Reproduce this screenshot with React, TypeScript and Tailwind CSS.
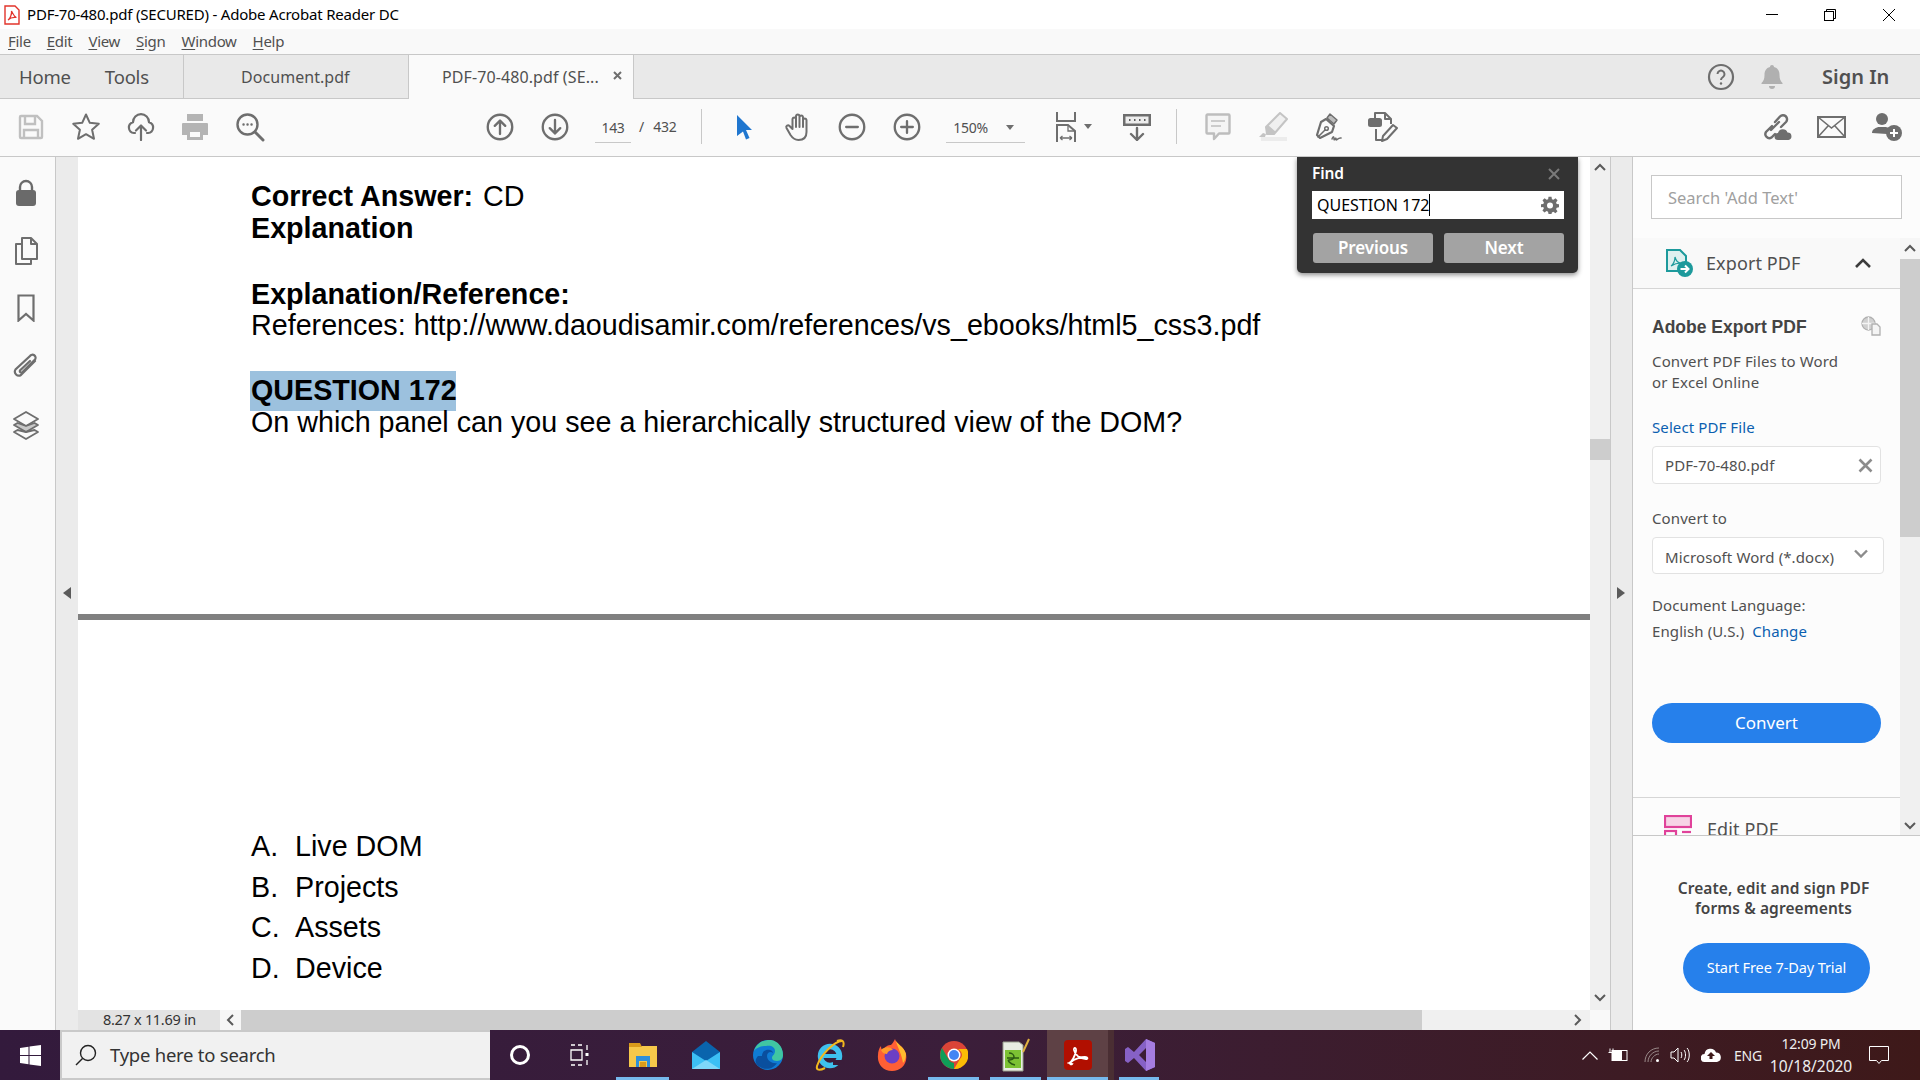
import type { ReactNode } from "react";

const ui = "font-['Noto_Sans',sans-serif]";

function Ico({ s = 24, vb = "0 0 24 24", className = "", children }: { s?: number; vb?: string; className?: string; children: ReactNode }) {
  return (
    <svg width={s} height={s} viewBox={vb} fill="none" stroke="#6e6e6e" strokeWidth="2" strokeLinecap="round" strokeLinejoin="round" className={className}>
      {children}
    </svg>
  );
}

function Slot({ w = 55, children }: { w?: number; children: ReactNode }) {
  return (
    <div className="flex items-center justify-center shrink-0 h-full" style={{ width: w }}>
      {children}
    </div>
  );
}

function U({ children }: { children: ReactNode }) {
  return <span className="underline underline-offset-2 decoration-1">{children}</span>;
}

function TitleBar() {
  return (
    <div className={`h-[29px] bg-white flex items-center shrink-0 ${ui}`}>
      <svg width="16" height="20" viewBox="0 0 16 20" className="ml-[4px]">
        <path d="M1 1h10l4 4v14H1z" fill="#fff" stroke="#e2342b" strokeWidth="1.4" />
        <path d="M4 15c2-1 4-6 3.500-9 2 4 3 6 5 6.500-3-.5-6 0-8.500 2.500z" fill="none" stroke="#e2342b" strokeWidth="1.200" />
      </svg>
      <span className="ml-[7px] text-[15px] text-black tracking-[-0.2px] whitespace-nowrap">PDF-70-480.pdf (SECURED) - Adobe Acrobat Reader DC</span>
      <div className="ml-auto flex items-center h-full pr-[2px]">
        <div className="w-[58px] h-full flex items-center justify-center">
          <div className="w-[12px] h-px bg-black" />
        </div>
        <div className="w-[58px] h-full flex items-center justify-center">
          <svg width="12" height="12" viewBox="0 0 12 12" fill="none" stroke="#000">
            <rect x=".5" y="2.500" width="9" height="9" />
            <path d="M2.500 2.500V.5h9v9h-2" />
          </svg>
        </div>
        <div className="w-[59px] h-full flex items-center justify-center">
          <svg width="12" height="12" viewBox="0 0 12 12" fill="none" stroke="#000">
            <path d="M0 0l12 12M12 0L0 12" />
          </svg>
        </div>
      </div>
    </div>
  );
}

function MenuBar() {
  return (
    <div className={`h-[26px] bg-[#f9f9f9] border-b border-[#c8c8c8] flex items-center shrink-0 pl-[8px] gap-[16px] text-[15px] text-[#505050] tracking-[-0.3px] ${ui}`}>
      <span><U>F</U>ile</span>
      <span><U>E</U>dit</span>
      <span><U>V</U>iew</span>
      <span><U>S</U>ign</span>
      <span><U>W</U>indow</span>
      <span><U>H</U>elp</span>
    </div>
  );
}

function TabBar() {
  return (
    <div className={`h-[44px] bg-[#e9e9e9] border-b border-[#c8c8c8] flex items-center shrink-0 text-[#505050] ${ui}`}>
      <div className="w-[184px] h-full border-r border-[#c8c8c8] flex items-center pl-[19px] gap-[34px] text-[18.500px] tracking-[-0.2px]">
        <span>Home</span>
        <span>Tools</span>
      </div>
      <div className="w-[224px] h-full flex items-center pl-[57px] text-[16px] tracking-[0.05px]">Document.pdf</div>
      <div className="w-[226px] h-[44px] bg-[#fafafa] border-x border-[#c8c8c8] flex items-center pl-[33px] text-[16px] tracking-[0.1px] whitespace-nowrap relative">
        PDF-70-480.pdf (SE...
        <svg width="9" height="9" viewBox="0 0 9 9" stroke="#6e6e6e" strokeWidth="2" className="absolute left-[204px] top-[16px]">
          <path d="M1 1l7 7M8 1L1 8" />
        </svg>
      </div>
      <div className="ml-auto flex items-center h-full pr-[24px]">
        <Slot w={50}>
          <svg width="28" height="28" viewBox="0 0 28 28" fill="none" stroke="#6e6e6e" strokeWidth="2.200">
            <circle cx="14" cy="14" r="12" />
            <path d="M10.500 11a3.500 3.500 0 1 1 5.500 3c-1.500 1-2 1.500-2 3" strokeWidth="2" />
            <circle cx="14" cy="20.500" r="1.200" fill="#6e6e6e" stroke="none" />
          </svg>
        </Slot>
        <Slot w={52}>
          <svg width="22" height="26" viewBox="0 0 22 26" fill="#b0b0b0">
            <path d="M11 1c1.200 0 2 .8 2 2 4 1 5.500 4 5.500 8 0 4 1 6 3 8v1H.5v-1c2-2 3-4 3-8 0-4 1.500-7 5.500-8 0-1.200.8-2 2-2z" />
            <path d="M8 22h6a3 3 0 0 1-6 0z" />
          </svg>
        </Slot>
        <div className="w-[98px] pl-[24px] pt-[1px] text-[20px] font-semibold text-[#505050] whitespace-nowrap">Sign In</div>
      </div>
    </div>
  );
}

function ToolBar() {
  return (
    <div className={`h-[58px] bg-[#fafafa] border-b border-[#c8c8c8] flex items-center shrink-0 pb-[2px] text-[#505050] ${ui}`}>
      <div className="w-[3px] shrink-0" />
      <Slot>
        <svg width="26" height="26" viewBox="0 0 26 26" fill="none" stroke="#c0c0c0" strokeWidth="2.400">
          <path d="M2 3a1 1 0 0 1 1-1h16l5 5v16a1 1 0 0 1-1 1H3a1 1 0 0 1-1-1z" />
          <path d="M7 2v8h10V2M6 24v-8h14v8" />
        </svg>
      </Slot>
      <Slot>
        <svg width="30" height="30" viewBox="0 0 30 30" fill="none" stroke="#6e6e6e" strokeWidth="2" strokeLinejoin="round">
          <path d="M15 2.500l3.800 8.300 9 1-6.700 6 1.900 9L15 22.200l-8 4.600 1.900-9-6.700-6 9-1z" />
        </svg>
      </Slot>
      <Slot>
        <svg width="28" height="28" viewBox="0 0 28 28" fill="none" stroke="#6e6e6e" strokeWidth="2.200" strokeLinecap="round" strokeLinejoin="round">
          <path d="M8 20H7a5.500 5.500 0 0 1-1-10.800 8 8 0 0 1 16 0A5.500 5.500 0 0 1 21 20h-1" />
          <path d="M14 27V13M9 17.500l5-5 5 5" />
        </svg>
      </Slot>
      <Slot w={53}>
        <svg width="28" height="28" viewBox="0 0 28 28" fill="#b4b4b4">
          <path d="M6 1h16v7H6zM2 10h24a1 1 0 0 1 1 1v11h-5v5H6v-5H1V11a1 1 0 0 1 1-1z" />
          <path d="M9 19h10v5H9z" fill="#fafafa" />
        </svg>
      </Slot>
      <Slot w={57}>
        <svg width="30" height="30" viewBox="0 0 30 30" fill="none" stroke="#6e6e6e" strokeWidth="2.400" strokeLinecap="round">
          <circle cx="12.500" cy="12.500" r="10" />
          <path d="M20 20l8 8" strokeWidth="3" />
          <path d="M8.500 12.500h.1M12.500 12.500h.1M16.500 12.500h.1" />
        </svg>
      </Slot>
      <div className="w-[194px] shrink-0" />
      <Slot>
        <Ico s={28}>
          <circle cx="12" cy="12" r="10.500" />
          <path d="M12 18V6.500M7.500 11l4.500-4.500 4.500 4.500" />
        </Ico>
      </Slot>
      <Slot>
        <Ico s={28}>
          <circle cx="12" cy="12" r="10.500" />
          <path d="M12 6v11.500M7.500 13l4.500 4.500 4.500-4.500" />
        </Ico>
      </Slot>
      <div className="w-[13px] shrink-0" />
      <div className="w-[36px] h-[30px] border-b border-[#c8c8c8] flex items-center justify-center text-[14px] shrink-0 mt-[3px] tracking-[-0.3px]">143</div>
      <span className="ml-[8px] text-[14px]">/</span>
      <span className="ml-[9px] text-[14px] tracking-[-0.3px]">432</span>
      <div className="ml-[25px] w-px h-[35px] bg-[#c8c8c8] shrink-0" />
      <div className="w-[14px] shrink-0" />
      <Slot w={56}>
        <svg width="17" height="26" viewBox="0 0 17 26" fill="#1f76cf">
          <path d="M1 1l15 15H10l3.500 8-3.500 1.500L7 17.500 1 22z" />
        </svg>
      </Slot>
      <Slot w={52}>
        <svg width="30" height="30" viewBox="0 0 30 30" fill="none" stroke="#6e6e6e" strokeWidth="2" strokeLinecap="round" strokeLinejoin="round">
          <path d="M9.500 17V7a1.800 1.800 0 0 1 3.500 0v8M13 15V4a1.800 1.800 0 0 1 3.500 0v11M16.500 15V5a1.800 1.800 0 0 1 3.500 0v10M20 15V8a1.800 1.800 0 0 1 3.500 0v12c0 5-3 8-8 8-4 0-6-2-8-5l-4-7c-1-2 1.500-3.500 3-2l3 3" />
        </svg>
      </Slot>
      <Slot>
        <Ico s={28}>
          <circle cx="12" cy="12" r="10.500" />
          <path d="M7 12h10" />
        </Ico>
      </Slot>
      <Slot>
        <Ico s={28}>
          <circle cx="12" cy="12" r="10.500" />
          <path d="M7 12h10M12 7v10" />
        </Ico>
      </Slot>
      <div className="w-[12px] shrink-0" />
      <div className="w-[79px] h-[30px] mt-[3px] border-b border-[#c8c8c8] flex items-center pl-[7px] text-[14px] shrink-0 tracking-[-0.3px] relative">
        150%
        <div className="absolute left-[60px] top-[12px] w-0 h-0 border-x-[4px] border-x-transparent border-t-[5px] border-t-[#6e6e6e]" />
      </div>
      <div className="w-[30px] shrink-0" />
      <svg width="22" height="30" viewBox="0 0 22 30" fill="none" stroke="#6e6e6e" strokeWidth="2" className="shrink-0">
        <path d="M2 0v9h18V0" />
        <path d="M2 30V13h11l7 6v11" />
        <path d="M13 13v6h7M5 26h12M5 26l2.500-2M5 26l2.500 2M17 26l-2.500-2M17 26l-2.500 2" strokeWidth="1.300" />
      </svg>
      <div className="ml-[7px] w-0 h-0 border-x-[4px] border-x-transparent border-t-[5px] border-t-[#6e6e6e] shrink-0" />
      <div className="w-[17px] shrink-0" />
      <Slot w={55}>
        <svg width="28" height="28" viewBox="0 0 28 28" fill="none" stroke="#6e6e6e" strokeWidth="2.400">
          <rect x="0" y="1" width="28" height="12" fill="#6e6e6e" stroke="none" />
          <rect x="2.500" y="3.500" width="23" height="7" fill="#ededed" stroke="none" />
          <path d="M6 7h1.500M11 7h1.500M16 7h1.500M21 7h1.500" stroke="#5a5a5a" strokeWidth="2" />
          <path d="M14 15v12M8 21l6 6 6-6" strokeLinecap="round" strokeLinejoin="round" />
        </svg>
      </Slot>
      <div className="ml-[12px] w-px h-[35px] bg-[#c8c8c8] shrink-0" />
      <div className="w-[13px] shrink-0" />
      <Slot w={55}>
        <svg width="26" height="28" viewBox="0 0 26 28" fill="none" stroke="#bdbdbd" strokeWidth="2.400" strokeLinejoin="round">
          <path d="M2.500 1.500h21a1 1 0 0 1 1 1v17a1 1 0 0 1-1 1H14L9 26v-5.500H2.500a1 1 0 0 1-1-1v-17a1 1 0 0 1 1-1z" fill="#f4f4f4" />
          <path d="M6 8h14M6 13h10" strokeWidth="1.600" />
        </svg>
      </Slot>
      <Slot w={55}>
        <svg width="30" height="30" viewBox="0 0 30 30" fill="none">
          <path d="M22 1l7 6-13 15H9l-1-7z" fill="#f0f0f0" stroke="#c4c4c4" strokeWidth="2" strokeLinejoin="round" />
          <path d="M8 15l1 7 7 0 2-2-8-7z" fill="#c4c4c4" />
          <path d="M5 21l3 1-1 3H1z" fill="#c4c4c4" />
          <rect x="3" y="25" width="26" height="4" fill="#ececec" />
        </svg>
      </Slot>
      <Slot w={55}>
        <svg width="30" height="30" viewBox="0 0 30 30" fill="none" stroke="#6e6e6e" strokeWidth="2.200" strokeLinejoin="round" strokeLinecap="round">
          <path d="M13 7l8 7-2 6-12 6-3-3 4-13z" />
          <path d="M5 25l7-7" strokeWidth="1.500" />
          <circle cx="13.500" cy="16.500" r="1.800" strokeWidth="1.500" />
          <path d="M14 6l3-4 7 6-3 4z" fill="#bdbdbd" stroke="#6e6e6e" strokeWidth="1.500" />
          <path d="M19 27c1-3 2-3 2 0s2-3 2 0 2-2 5-1" strokeWidth="1.500" />
        </svg>
      </Slot>
      <Slot w={55}>
        <svg width="30" height="30" viewBox="0 0 30 30" fill="none" stroke="#6e6e6e" strokeWidth="2" strokeLinejoin="round">
          <path d="M7 8V1h10l6 6v5" />
          <path d="M17 1v6h6" />
          <rect x="1" y="7" width="12" height="7" rx="1.500" fill="#6e6e6e" />
          <path d="M8 17v11h7" />
          <path d="M25 13l4 3-10 11-5 2 1-5z" />
        </svg>
      </Slot>
      <div className="ml-auto flex items-center h-full pr-[6px]">
        <Slot w={55}>
          <svg width="32" height="28" viewBox="0 0 32 28" fill="none" stroke="#6e6e6e" strokeWidth="2.400" strokeLinecap="round">
            <path d="M11 13l-6 6a4 4 0 0 0 5.500 5.500L14 21M10 17l8-8M14 9l5-5.500A4 4 0 0 1 25 9l-5 5" />
            <path d="M17 27a3.500 3.500 0 0 1 0-7 5 5 0 0 1 9.500-.5A3.800 3.800 0 0 1 27.500 27z" fill="#6e6e6e" stroke="none" />
          </svg>
        </Slot>
        <Slot w={55}>
          <svg width="29" height="22" viewBox="0 0 29 22" fill="none" stroke="#6e6e6e" strokeWidth="2">
            <rect x="1" y="1" width="27" height="20" />
            <path d="M1 1l13.500 11L28 1M1 21l10-11M28 21L18 10" strokeWidth="1.600" />
          </svg>
        </Slot>
        <Slot w={55}>
          <svg width="32" height="30" viewBox="0 0 32 30" fill="#6e6e6e">
            <circle cx="11" cy="7" r="6" />
            <path d="M1 21c0-4 4-5 6-6h8c2 .5 3 1 4 2a9 9 0 0 0-3 5z" />
            <circle cx="23" cy="21" r="8" />
            <path d="M23 17v8M19 21h8" stroke="#fff" strokeWidth="2" />
          </svg>
        </Slot>
      </div>
    </div>
  );
}

function LeftRail() {
  return (
    <div className="w-[56px] bg-[#fafafa] border-r border-[#c8c8c8] shrink-0 flex flex-col items-center pt-[21px] pr-[3px]">
      <div className="h-[30px] flex items-center justify-center">
        <svg width="22" height="28" viewBox="0 0 22 28" fill="#6a6a6a">
          <path d="M5 12V8a6 6 0 0 1 12 0v4" fill="none" stroke="#6a6a6a" strokeWidth="2.400" />
          <rect x="1" y="11" width="20" height="16" rx="3" />
        </svg>
      </div>
      <div className="h-[28px] mt-[29px] flex items-center justify-center">
        <svg width="24" height="28" viewBox="0 0 24 28" fill="none" stroke="#6e6e6e" strokeWidth="2" strokeLinejoin="round">
          <path d="M8 7H2v20h15v-5" />
          <path d="M8 1h9l6 6v15H8z" />
          <path d="M17 1v6h6" />
        </svg>
      </div>
      <div className="h-[28px] mt-[29px] flex items-center justify-center">
        <svg width="18" height="28" viewBox="0 0 18 28" fill="none" stroke="#6e6e6e" strokeWidth="2.200">
          <path d="M1.500 1.500h15v25L9 20l-7.500 6.500z" />
        </svg>
      </div>
      <div className="h-[28px] mt-[31px] flex items-center justify-center">
        <svg width="26" height="28" viewBox="0 0 26 28" fill="none" stroke="#6e6e6e" strokeWidth="2.200" strokeLinecap="round">
          <path d="M22 8L8 22a4 4 0 0 1-5.500-5.500L17 3a3 3 0 0 1 5 3.500L9 19.500a1.500 1.500 0 0 1-2-2L17 8" />
        </svg>
      </div>
      <div className="h-[30px] mt-[30px] flex items-center justify-center">
        <svg width="28" height="30" viewBox="0 0 28 30" fill="none" stroke="#6e6e6e" strokeWidth="1.800" strokeLinejoin="round">
          <path d="M14 1l12 7-12 7L2 8z" />
          <path d="M2 14l12 7 12-7-3.500-2L14 15 5.500 12z" fill="#c8c8c8" />
          <path d="M2 21l12 7 12-7-3.500-2L14 21 5.500 19z" />
        </svg>
      </div>
    </div>
  );
}

function FindPanel() {
  return (
    <div className={`absolute right-[12px] top-0 w-[281px] h-[116px] bg-[#333333] rounded-b-[5px] shadow-[0_2px_5px_rgba(0,0,0,0.45)] pl-[15px] pr-[14px] ${ui}`}>
      <div className="h-[34px] flex items-center justify-between pr-[1px]">
        <span className="text-[15.500px] font-semibold text-white tracking-[-0.1px]">Find</span>
        <svg width="12" height="12" viewBox="0 0 12 12" stroke="#7a7a7a" strokeWidth="2" className="mr-[3px] -mt-[1px]">
          <path d="M1 1l10 10M11 1L1 11" />
        </svg>
      </div>
      <div className="h-[28px] bg-white flex items-center pl-[5px] pr-[5px] text-[16px] text-black tracking-[0px] whitespace-nowrap">
        <span>QUESTION 172</span>
        <span className="w-px h-[22px] bg-black" />
        <svg width="18" height="18" viewBox="0 0 24 24" fill="#6e6e6e" className="ml-auto">
          <path fillRule="evenodd" d="M10 1h4l.6 3.200 2 .8L19.300 3l2.800 2.800-2 2.700.8 2L24 11v4l-3.100.5-.8 2 1.900 2.700-2.800 2.800-2.700-1.900-2 .8L14 24h-4l-.6-3.100-2-.8-2.700 1.900-2.800-2.800 1.900-2.700-.8-2L0 15v-4l3.100-.5.8-2-1.900-2.700L4.800 3l2.700 2 2-.8zM12 8.500a4 4 0 1 0 0 8 4 4 0 0 0 0-8z" />
        </svg>
      </div>
      <div className="mt-[13px] flex gap-[11px] pl-[1px] pt-[1px]">
        <div className="w-[120px] h-[30px] rounded-[3px] bg-[#a3a3a3] flex items-center justify-center text-[17px] font-semibold text-white tracking-[-0.1px]">Previous</div>
        <div className="w-[120px] h-[30px] rounded-[3px] bg-[#a3a3a3] flex items-center justify-center text-[17px] font-semibold text-white tracking-[-0.1px]">Next</div>
      </div>
    </div>
  );
}

function Doc() {
  const doc = "h-[32px] leading-[32px] whitespace-nowrap";
  return (
    <div className="flex-1 relative bg-white overflow-hidden font-['Liberation_Sans',Arial,sans-serif] text-[28.700px] text-black">
      <div className="pl-[173px] pt-[23px]">
        <div className={doc}><b>Correct Answer:</b> <span className="ml-[2px]">CD</span></div>
        <div className={`${doc} font-bold`}>Explanation</div>
        <div className={`${doc} font-bold mt-[34px]`}>Explanation/Reference:</div>
        <div className={`${doc} -mt-[1px]`}>References: http://www.daoudisamir.com/references/vs_ebooks/html5_css3.pdf</div>
        <div className="mt-[30px] w-[206px] -ml-px pl-px h-[40px] leading-[38px] bg-[#9cc1de] font-bold whitespace-nowrap">QUESTION 172</div>
        <div className={`${doc} -mt-[5px]`}>On which panel can you see a hierarchically structured view of the DOM?</div>
      </div>
      <div className="h-[6px] bg-[#808080] mt-[176px]" />
      <div className="pl-[173px] mt-[206px]">
        {[["A.", "Live DOM"], ["B.", "Projects"], ["C.", "Assets"], ["D.", "Device"]].map(([k, v]) => (
          <div key={k} className="h-[40.700px] leading-[40px] flex">
            <span className="w-[44px]">{k}</span>
            <span>{v}</span>
          </div>
        ))}
      </div>
      <FindPanel />
    </div>
  );
}

function Chev({ dir, c = "#5a5a5a" }: { dir: "u" | "d" | "l" | "r"; c?: string }) {
  const d = { u: "M1 7l5-5 5 5", d: "M1 2l5 5 5-5", l: "M8 1L3 6l5 5", r: "M4 1l5 5-5 5" }[dir];
  const vb = dir === "u" || dir === "d" ? "0 0 12 9" : "0 0 12 12";
  return (
    <svg width="12" height={dir === "u" || dir === "d" ? 9 : 12} viewBox={vb} fill="none" stroke={c} strokeWidth="2">
      <path d={d} />
    </svg>
  );
}

function DocArea() {
  return (
    <div className={`flex-1 min-w-0 flex flex-col ${ui}`}>
      <div className="flex-1 min-h-0 flex">
        <Doc />
        <div className="w-[20px] bg-[#f0f0f0] shrink-0 flex flex-col items-center relative">
          <div className="h-[21px] flex items-center justify-center"><Chev dir="u" /></div>
          <div className="w-full h-[21px] bg-[#cdcdcd] mt-[261px]" />
          <div className="mt-auto h-[26px] flex items-center justify-center"><Chev dir="d" /></div>
        </div>
      </div>
      <div className="h-[20px] bg-[#f0f0f0] flex items-center shrink-0">
        <div className="w-[142px] h-full bg-[#e3e3e3] flex items-center pl-[25px] text-[14.500px] text-[#333] tracking-[-0.3px] whitespace-nowrap">8.27 x 11.69 in</div>
        <div className="w-[21px] h-full bg-[#f6f6f6] flex items-center justify-center"><Chev dir="l" /></div>
        <div className="w-[1181px] h-full bg-[#cdcdcd]" />
        <div className="flex-1" />
        <div className="w-[26px] h-full flex items-center justify-center"><Chev dir="r" /></div>
        <div className="w-[20px] h-full bg-[#f9f9f9]" />
      </div>
    </div>
  );
}

function RightPanel() {
  const label = "h-[20px] leading-[20px] text-[15px] text-[#505050] whitespace-nowrap tracking-[0.1px]";
  return (
    <div className={`w-[287px] shrink-0 bg-[#fcfcfc] flex flex-col overflow-hidden ${ui}`}>
      <div className="h-[81px] shrink-0 pt-[18px] pl-[18px]">
        <div className="w-[251px] h-[44px] border border-[#c8c8c8] bg-white flex items-center pl-[16px] pt-[2px] text-[16.500px] text-[#a0a0a0] tracking-[0px]">Search 'Add Text'</div>
      </div>
      <div className="flex-1 min-h-0 flex">
        <div className="flex-1 min-w-0 overflow-hidden">
          <div className="h-[51px] bg-[#f9f9f9] border-b border-[#d6d6d6] flex items-center pl-[32px] relative">
            <svg width="28" height="28" viewBox="0 0 28 28" fill="none" className="shrink-0">
              <path d="M2 1h13l6 6v15H2z" fill="#dff0ef" stroke="#1d9a9c" strokeWidth="2" />
              <path d="M6 17c2-1 4-5 4-9 1 4 3 6 6 6-3 0-7 1-10 3z" stroke="#1d9a9c" strokeWidth="1.200" />
              <circle cx="20" cy="20" r="8" fill="#1d9a9c" />
              <path d="M15.500 20h8M20 16.500l3.500 3.500-3.500 3.500" stroke="#fff" strokeWidth="2" />
            </svg>
            <span className="ml-[13px] text-[18px] text-[#505050] tracking-[0.1px]">Export PDF</span>
            <svg width="16" height="10" viewBox="0 0 16 10" fill="none" stroke="#3c3c3c" strokeWidth="2.600" className="absolute left-[222px] top-[20px]">
              <path d="M1 9l7-7 7 7" />
            </svg>
          </div>
          <div className="pl-[19px]">
            <div className="mt-[26px] h-[24px] flex items-center relative w-[229px]">
              <span className="text-[17.500px] font-bold font-['Liberation_Sans',sans-serif] text-[#444]">Adobe Export PDF</span>
              <svg width="20" height="20" viewBox="0 0 20 20" fill="none" stroke="#b0b0b0" strokeWidth="1.300" className="absolute right-0 top-[1px]">
                <circle cx="7.500" cy="7.500" r="6.500" fill="#d0d0d0" />
                <path d="M1 7.500h13M7.500 1v13" stroke="#f4f4f4" />
                <path d="M11 8h5l3 3v8h-8z" fill="#f4f4f4" />
              </svg>
            </div>
            <div className="mt-[12px] text-[15px] leading-[21px] text-[#505050] tracking-[0.15px] whitespace-nowrap">
              Convert PDF Files to Word
              <br />
              or Excel Online
            </div>
            <div className={`${label} mt-[24px] !text-[#0b5fb0]`}>Select PDF File</div>
            <div className="mt-[9px] w-[229px] h-[38px] rounded-[4px] border border-[#e2e2e2] bg-white flex items-center pl-[12px] pr-[7px] text-[15px] text-[#505050] tracking-[0.1px]">
              PDF-70-480.pdf
              <svg width="15" height="15" viewBox="0 0 15 15" stroke="#8c8c8c" strokeWidth="2.600" className="ml-auto">
                <path d="M1.500 1.500l12 12M13.500 1.500l-12 12" />
              </svg>
            </div>
            <div className={`${label} mt-[24px]`}>Convert to</div>
            <div className="mt-[9px] w-[232px] h-[37px] rounded-[4px] border border-[#e2e2e2] bg-white flex items-center pl-[12px] pt-[4px] text-[15px] text-[#505050] tracking-[0.1px] relative whitespace-nowrap">
              Microsoft Word (*.docx)
              <svg width="14" height="9" viewBox="0 0 14 9" fill="none" stroke="#8c8c8c" strokeWidth="2.400" className="absolute right-[15px] top-[11px]">
                <path d="M1 1.500l6 6 6-6" />
              </svg>
            </div>
            <div className={`${label} mt-[21px]`}>Document Language:</div>
            <div className={`${label} mt-[6px]`}>
              English (U.S.) <span className="ml-[4px] text-[#0b5fb0]">Change</span>
            </div>
            <div className="mt-[62px] w-[229px] h-[40px] rounded-full bg-[#2680eb] flex items-center justify-center text-[17px] text-white">Convert</div>
          </div>
          <div className="mt-[54px] h-[38px] border-t border-[#d6d6d6] pl-[31px] flex items-start pt-[17px] whitespace-nowrap">
            <svg width="28" height="30" viewBox="0 0 28 30" fill="none" stroke="#e0429a" strokeWidth="2.200" className="shrink-0">
              <rect x="1" y="1" width="26" height="11" fill="#f7d3e6" />
              <rect x="1" y="16" width="11" height="12" />
              <path d="M18 17h9" />
            </svg>
            <span className="ml-[15px] mt-[1px] text-[18px] text-[#505050] tracking-[0.1px]">Edit PDF</span>
          </div>
        </div>
        <div className="w-[20px] bg-[#f0f0f0] shrink-0 flex flex-col">
          <div className="h-[21px] bg-[#f6f6f6] flex items-center justify-center"><Chev dir="u" /></div>
          <div className="h-[278px] bg-[#cdcdcd]" />
          <div className="mt-auto h-[20px] flex items-center justify-center"><Chev dir="d" /></div>
        </div>
      </div>
      <div className="h-[195px] shrink-0 border-t border-[#c8c8c8] bg-[#fcfcfc] flex flex-col items-center pt-[42px]">
        <div className="text-[15.500px] leading-[20px] font-semibold text-[#444] text-center whitespace-nowrap tracking-[0.1px] -ml-[6px]">
          Create, edit and sign PDF
          <br />
          forms &amp; agreements
        </div>
        <div className="mt-[25px] w-[187px] h-[50px] rounded-full bg-[#2680eb] flex items-center justify-center text-[14.500px] text-white tracking-[-0.1px]">Start Free 7-Day Trial</div>
      </div>
    </div>
  );
}

function TaskIcon({ on, active, w = 62, children }: { on?: boolean; active?: boolean; w?: number; children: ReactNode }) {
  return (
    <div className={`relative h-full flex items-center justify-center shrink-0 ${active ? "bg-[#5e4145]" : ""}`} style={{ width: w }}>
      {children}
      {on && <div className={`absolute bottom-0 h-[3px] bg-[#76b9ed] ${active ? "left-0 right-0" : "left-[5px] right-[6px]"}`} />}
    </div>
  );
}

function Taskbar() {
  return (
    <div className={`h-[50px] shrink-0 flex items-center bg-gradient-to-r from-[#331a3c] via-[#3b1e3a] to-[#3e1919] ${ui}`}>
      <div className="w-[60px] h-full flex items-center justify-center shrink-0">
        <svg width="21" height="21" viewBox="0 0 21 21" fill="#fff">
          <path d="M0 3l8.500-1.200V10H0zM9.500 1.600L21 0v10H9.500zM0 11h8.500v8.200L0 18zM9.500 11H21v10L9.500 19.400z" />
        </svg>
      </div>
      <div className="w-[430px] h-full bg-[#f1f1f1] border-2 border-[#c9c9c9] border-r-0 flex items-center pl-[13px] text-[#333] shrink-0">
        <svg width="22" height="22" viewBox="0 0 22 22" fill="none" stroke="#222" strokeWidth="1.400">
          <circle cx="13" cy="9" r="7.500" />
          <path d="M7.500 14.500L1 21" />
        </svg>
        <span className="ml-[13px] text-[18.500px] tracking-[-0.25px]">Type here to search</span>
      </div>
      <div className="w-[20px] shrink-0" />
      <div className="w-[20px] h-[20px] rounded-full border-[3px] border-white shrink-0" />
      <div className="w-[40px] shrink-0" />
      <svg width="20" height="22" viewBox="0 0 20 22" fill="none" stroke="#fff" strokeWidth="1.300" className="shrink-0">
        <path d="M1 1h4M8 1h4M1 21h4M8 21h4M1 6h11v10H1zM17 1v5M17 16v5" />
        <rect x="15.500" y="9" width="3" height="3" fill="#fff" stroke="none" />
      </svg>
      <div className="w-[21px] shrink-0" />
      <TaskIcon w={64} on>
        <svg width="28" height="26" viewBox="0 0 28 26">
          <path d="M0 1h10l2 3h16v21H0z" fill="#f6c84a" />
          <path d="M0 1h11l2 4H0z" fill="#d99a1b" />
          <path d="M7 14h14v11h-3v-6H10v6H7z" fill="#2f8fd8" />
          <rect x="11" y="20" width="6" height="5" fill="#d99a1b" />
        </svg>
      </TaskIcon>
      <TaskIcon w={62}>
        <svg width="28" height="28" viewBox="0 0 28 28">
          <path d="M0 11L14 0l14 11v17H0z" fill="#0a64ad" />
          <path d="M0 11l14 9 14-9v17H0z" fill="#3cc0f5" />
          <path d="M0 28l14-9 14 9z" fill="#7ed8fa" />
        </svg>
      </TaskIcon>
      <TaskIcon w={62}>
        <svg width="30" height="34" viewBox="0 0 30 34">
          <circle cx="15" cy="17" r="15" fill="#0f7bd3" />
          <path d="M1 13C4 4 12 1.500 18 2c7 1 12 7 12 15 0 3-2 6-6 6-3 0-5-1-5-3 0-3 3-3 3-7 0-4-4-6-9-5-5 0-10 2-12 5z" fill="#40c6a2" />
          <path d="M9 18c0-5 4-7 8-6 2 .5 3 2 3 3-2-2-6-1-6 3 0 5 6 8 10 7-3 5-10 8-17 4-6-3-5-8-2-11z" fill="#0a4f9e" />
        </svg>
      </TaskIcon>
      <TaskIcon w={62}>
        <svg width="30" height="34" viewBox="0 0 30 34" fill="none">
          <circle cx="15" cy="18" r="9.500" stroke="#3ec1ee" strokeWidth="5.500" />
          <path d="M7 18h17" stroke="#3ec1ee" strokeWidth="4" />
          <rect x="18" y="22" width="12" height="5" fill="#3a1d3a" />
          <path d="M27 3C20 3 6 16 2 28c-1 4 2 5 8 2" stroke="#f2b81e" strokeWidth="2" />
          <path d="M22 3c5-2 8 0 6 6" stroke="#f2b81e" strokeWidth="2" />
        </svg>
      </TaskIcon>
      <TaskIcon w={62}>
        <svg width="30" height="34" viewBox="0 0 30 34">
          <path d="M18 1c1 5 9 7 11 15 2 10-5 17-14 17S0 26 1 17c0-3 1-7 3-9 0 3 1 4 2 5 1-5 6-6 8-6 2-2 3-4 4-6z" fill="#ff5f35" />
          <path d="M18 1c1 5 9 7 11 15 0 3-1 7-3 9-1-8-5-15-8-24z" fill="#ffbd2e" />
          <circle cx="15" cy="18" r="7.500" fill="#6b3fc4" />
          <path d="M4 12c3-3 9-4 12 0-3 0-5 1-6 4-2 0-5-1-6-4z" fill="#ff9a2b" />
        </svg>
      </TaskIcon>
      <TaskIcon w={62} on>
        <svg width="28" height="28" viewBox="0 0 28 28">
          <circle cx="14" cy="14" r="14" fill="#db4437" />
          <path d="M14 28a14 14 0 0 1-12-21l7 12a6 6 0 0 0 5 3z" fill="#0f9d58" />
          <path d="M14 8h13a14 14 0 0 1-13 20l6-10a6 6 0 0 0-6-10z" fill="#fbbc05" />
          <circle cx="14" cy="14" r="6.500" fill="#fff" />
          <circle cx="14" cy="14" r="5" fill="#4285f4" />
        </svg>
      </TaskIcon>
      <TaskIcon w={62} on>
        <svg width="28" height="34" viewBox="0 0 28 34">
          <path d="M1 4h16l4 3v26H1z" fill="#e8ece2" stroke="#9aa08e" />
          <rect x="3" y="12" width="16" height="18" fill="#7cc133" />
          <path d="M5 20h12M7 15c3 0 5 2 5 4s-3 3-5 3 1 4 6 5" stroke="#2b5a12" strokeWidth="1.500" fill="none" />
          <path d="M21 14l6-13" stroke="#e0b040" strokeWidth="2" />
        </svg>
      </TaskIcon>
      <TaskIcon w={61} on active>
        <div className="w-[28px] h-[30px] rounded-[4px] bg-[#b10f00] flex items-center justify-center">
          <svg width="22" height="22" viewBox="0 0 22 22" fill="none" stroke="#fff" strokeWidth="1.800">
            <path d="M2 19c3-1 6-7 7-12 .5-4-2.500-4-2-1 1 5 6 9 12 9 2 0 2-2-1-2-4 0-11 2-14 5-2 2 0 3 1 2z" />
          </svg>
        </div>
      </TaskIcon>
      <div className="w-[6px] shrink-0 h-full bg-[#4a2e33]" />
      <TaskIcon w={51} on>
        <svg width="30" height="34" viewBox="0 0 30 34">
          <path d="M21 1l9 4v24l-9 4-12-13-6 5-3-2V11l3-2 6 5zM21 10l-7 7 7 7z" fill="#8661c5" />
          <path d="M21 1l9 4v24l-9 4z" fill="#a57de0" />
        </svg>
      </TaskIcon>
      <div className="ml-auto flex items-center h-full text-white shrink-0">
        <svg width="16" height="9" viewBox="0 0 16 9" fill="none" stroke="#fff" strokeWidth="1.200" className="mr-[10px]">
          <path d="M.5 8.500L8 1l7.500 7.500" />
        </svg>
        <svg width="20" height="14" viewBox="0 0 20 14" fill="none" stroke="#fff" className="mr-[16px]">
          <path d="M2 .5v4M5 .5v4M.5 4.500h6V7H4" />
          <rect x="4" y="2.500" width="15" height="10" />
          <rect x="4" y="3" width="10" height="9" fill="#fff" stroke="none" />
        </svg>
        <svg width="16" height="16" viewBox="0 0 16 16" fill="none" stroke="#9a8a8a" className="mr-[10px]">
          <path d="M1 15C1 7 7 1 15 1M4 15c0-6 5-11 11-11M7 15c0-4 4-8 8-8" />
          <circle cx="13.500" cy="13.500" r="1.500" fill="#fff" stroke="none" />
        </svg>
        <svg width="20" height="16" viewBox="0 0 20 16" fill="none" stroke="#fff" className="mr-[11px]">
          <path d="M1 5h3l4-4v14l-4-4H1zM11 5c1 1 1 5 0 6M14 3c2 2 2 8 0 10M17 1c3 3 3 11 0 14" />
        </svg>
        <svg width="20" height="14" viewBox="0 0 20 14" className="mr-[13px]">
          <path d="M4 14a4 4 0 0 1-.5-8A6 6 0 0 1 15 4.500 4.800 4.800 0 0 1 16 14z" fill="#fff" />
          <path d="M10 4l-4 4h2.500v3h3V8H14z" fill="#3e1919" />
        </svg>
        <span className="text-[14px] text-[#eee] tracking-[-0.2px]">ENG</span>
        <div className="w-[86px] ml-[6px] flex flex-col items-center text-[14px] leading-[23px] text-[#eee] tracking-[-0.2px] whitespace-nowrap">
          <span>12:09 PM</span>
          <span className="text-[15.500px] tracking-[0px]">10/18/2020</span>
        </div>
        <div className="w-[20px] ml-[15px] mr-[31px]">
          <svg width="20" height="20" viewBox="0 0 20 20" fill="none" stroke="#fff">
            <path d="M.5 1.500h19v14h-7l-2.500 3-2.500-3h-7z" />
          </svg>
        </div>
      </div>
    </div>
  );
}

export default function App() {
  return (
    <div className="w-[1920px] h-[1080px] flex flex-col overflow-hidden bg-white">
      <TitleBar />
      <MenuBar />
      <TabBar />
      <ToolBar />
      <div className="flex-1 min-h-0 flex">
        <LeftRail />
        <div className="w-[22px] bg-[#ebebeb] shrink-0 flex items-center justify-center pb-[2px]">
          <div className="w-0 h-0 border-y-[6px] border-y-transparent border-r-[8px] border-r-[#5a5a5a]" />
        </div>
        <DocArea />
        <div className="w-[23px] bg-[#ebebeb] border-x border-[#c8c8c8] shrink-0 flex items-center justify-center pb-[2px] pr-[2px]">
          <div className="w-0 h-0 border-y-[6px] border-y-transparent border-l-[8px] border-l-[#5a5a5a]" />
        </div>
        <RightPanel />
      </div>
      <Taskbar />
    </div>
  );
}
